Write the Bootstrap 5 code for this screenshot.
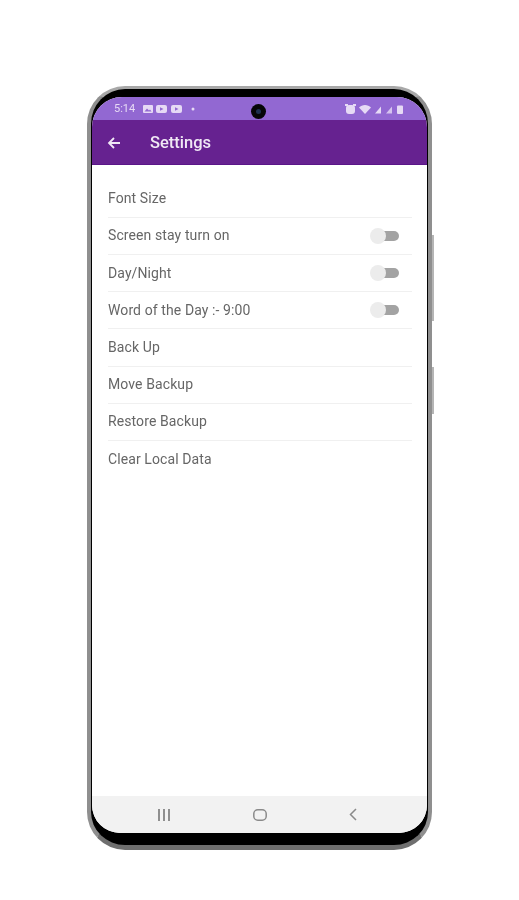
<!DOCTYPE html>
<html lang="en">
<head>
<meta charset="utf-8">
<title>Settings</title>
<link href="https://cdn.jsdelivr.net/npm/bootstrap@5.3.0/dist/css/bootstrap.min.css" rel="stylesheet">
<style>
html,body{height:100%;background:#fff;margin:0;overflow:hidden}
.stage{padding:86px 0 0 87px;width:519px;height:900px}
.handset{position:relative;width:345px;height:764px;border-radius:38px;background:#000;border:solid #8f8f8f;border-width:3px 4px 5px 4px;border-top-color:#a8a8a8;border-bottom-color:#6f6f6f;padding:8px 1px 12px 1px;filter:blur(.5px)}
.sidekey{position:absolute;right:-6px;width:2px;background:#b5b5b5}
.key-a{top:146px;height:86px}
.key-b{top:278px;height:47px}
.display{height:100%;border-radius:30px 30px 28px 28px;overflow:hidden;background:#fff;display:flex;flex-direction:column;font-family:Roboto,"Liberation Sans",sans-serif}
.statusline{height:23px;flex:none;background:#9268d2;color:#e6daf5;font-size:11px;padding:0 22px;position:relative}
.clock{position:relative;top:1px}
.punch{position:absolute;left:159px;top:7px;width:15px;height:15px;border-radius:50%;background:#060608}
.punch::after{content:"";position:absolute;left:5px;top:5px;width:5px;height:5px;border-radius:50%;background:#1d3050}
.appbar{height:45px;flex:none;background:#662290;border-bottom:1px solid #5a1688;color:#f0e8f5;font-size:16.5px;font-weight:500;padding-left:15px;gap:29px;padding-top:2px}
.rows{flex:1;padding:15.6px 15px 0 16px}
.rowline{height:37.2px;border-bottom:1px solid #f0f0f0;color:#666;font-size:14px;letter-spacing:.1px}
.rowline:last-child{border-bottom:0}
.toggle{position:relative;width:29px;height:16px;margin-right:13px;flex:none}
.toggle::before{content:"";position:absolute;right:0;top:3px;width:20px;height:10px;border-radius:5px;background:#a3a3a3}
.toggle::after{content:"";position:absolute;left:0;top:0;width:16px;height:16px;border-radius:50%;background:#ececec}
.softkeys{height:37px;flex:none;background:#f2f2f2;padding:0 70px 0 66px}
</style>
</head>
<body>
<div class="stage">
  <div class="handset">
    <span class="sidekey key-a"></span>
    <span class="sidekey key-b"></span>
    <div class="display">
      <div class="statusline d-flex align-items-center justify-content-between">
        <div class="d-flex align-items-center gap-1">
          <span class="clock">5:14</span>
          <svg class="ms-1" width="40" height="10" viewBox="0 0 40 10" fill="#e6daf5"><rect x="0" y="1" width="10" height="8" rx="1"/><rect x="13" y="1" width="11" height="8" rx="2"/><rect x="28" y="1" width="11" height="8" rx="2"/><path d="M17 3.200l3.500 1.800L17 6.800z" fill="#9268d2"/><path d="M32 3.200l3.500 1.800L32 6.800z" fill="#9268d2"/><path d="M1.500 7.500l2.500-3 2 2 1-1 1.500 2z" fill="#9268d2"/></svg>
          <svg class="ms-1" width="4" height="4" viewBox="0 0 4 4" fill="#e6daf5"><circle cx="2" cy="2" r="1.500"/></svg>
        </div>
        <span class="punch"></span>
        <svg width="60" height="12" viewBox="0 0 60 12" fill="#e6daf5"><rect x="1" y="2" width="9" height="9" rx="3"/><rect x="0" y="1" width="3" height="2"/><rect x="8" y="1" width="3" height="2"/><path d="M14 4.500C17 1 23 1 26 4.500L20 11z"/><path d="M30 10.500l6-7v7z"/><path d="M41 10.500l6-7v7z" opacity=".8"/><rect x="52" y="2.500" width="6" height="8.500" rx="1"/></svg>
      </div>
      <div class="appbar d-flex align-items-center">
        <svg width="14" height="14" viewBox="0 0 14 14" fill="none" stroke="#f0e8f5" stroke-width="1.800"><path d="M13 7H2M7 2L2 7l5 5"/></svg>
        <span>Settings</span>
      </div>
      <div class="rows">
        <div class="rowline d-flex align-items-center justify-content-between"><span>Font Size</span></div>
        <div class="rowline d-flex align-items-center justify-content-between"><span>Screen stay turn on</span><span class="toggle"></span></div>
        <div class="rowline d-flex align-items-center justify-content-between"><span>Day/Night</span><span class="toggle"></span></div>
        <div class="rowline d-flex align-items-center justify-content-between"><span>Word of the Day :- 9:00</span><span class="toggle"></span></div>
        <div class="rowline d-flex align-items-center justify-content-between"><span>Back Up</span></div>
        <div class="rowline d-flex align-items-center justify-content-between"><span>Move Backup</span></div>
        <div class="rowline d-flex align-items-center justify-content-between"><span>Restore Backup</span></div>
        <div class="rowline d-flex align-items-center justify-content-between"><span>Clear Local Data</span></div>
      </div>
      <div class="softkeys d-flex align-items-center justify-content-between">
        <svg width="13" height="12" viewBox="0 0 13 12" fill="#8f8f8f"><rect x="0" y="0" width="2" height="12"/><rect x="5" y="0" width="2" height="12"/><rect x="10" y="0" width="2" height="12"/></svg>
        <svg width="14" height="12" viewBox="0 0 14 12" fill="none" stroke="#8a8a8a" stroke-width="1.500"><rect x=".8" y=".8" width="12.400" height="10.400" rx="4"/></svg>
        <svg width="8" height="13" viewBox="0 0 8 13" fill="none" stroke="#8a8a8a" stroke-width="1.500"><path d="M7 1L1.500 6.500 7 12"/></svg>
      </div>
    </div>
  </div>
</div>
<script src="https://cdn.jsdelivr.net/npm/bootstrap@5.3.0/dist/js/bootstrap.bundle.min.js"></script>
</body>
</html>
